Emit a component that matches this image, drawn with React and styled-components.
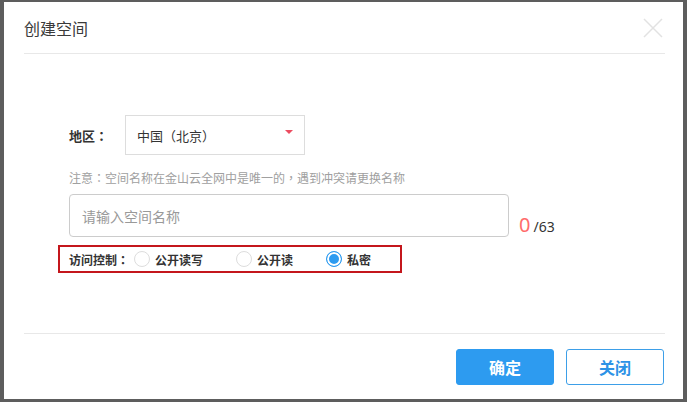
import React from "react";
import styled, { createGlobalStyle } from "styled-components";

const Global = createGlobalStyle`
  html, body { margin: 0; padding: 0; background: #5d5d5d; }
  body {
    font-family: "Noto Sans CJK SC", "Microsoft YaHei", sans-serif;
  }
  * { box-sizing: border-box; }
`;

const Page = styled.div`
  width: 687px;
  height: 402px;
  padding: 2px 4px 3px 4px;
  background: #5d5d5d;
`;

const Modal = styled.div`
  height: 100%;
  background: #fff;
  display: flex;
  flex-direction: column;
  padding: 0 18px 0 20px;
`;

const Header = styled.div`
  height: 52px;
  display: flex;
  align-items: center;
  justify-content: space-between;
  border-bottom: 1px solid #e8e8e8;
`;

const Title = styled.div`
  font-size: 16px;
  color: #3a3a3a;
  line-height: 1;
  margin-top: 1px;
`;

const CloseBtn = styled.div`
  width: 20px;
  height: 20px;
  margin-right: 2px;
  display: flex;
`;

const Body = styled.div`
  padding-left: 45px;
  display: flex;
  flex-direction: column;
`;

const Row = styled.div`
  display: flex;
  align-items: center;
  margin-top: ${(p) => p.$mt || 0}px;
`;

/* centred full-width punctuation, as in the reference's font */
const Punct = styled.span`
  font-family: "Noto Sans CJK TC", "Noto Sans CJK SC", sans-serif;
`;

const Label = styled.div`
  width: 56px;
  flex-shrink: 0;
  white-space: nowrap;
  font-size: 13px;
  font-weight: bold;
  color: #333;
`;

const Select = styled.div`
  position: relative;
  width: 180px;
  height: 40px;
  border: 1px solid #ddd;
  display: flex;
  align-items: center;
  padding-left: 11px;
  font-size: 13px;
  color: #333;
  white-space: nowrap;
`;

const Caret = styled.span`
  position: absolute;
  right: 11px;
  top: 14px;
  width: 0;
  height: 0;
  border-left: 4px solid transparent;
  border-right: 4px solid transparent;
  border-top: 4px solid #ec4c60;
`;

const Note = styled.div`
  margin-top: 14px;
  font-size: 12px;
  line-height: 17px;
  color: #a0a0a0;
  white-space: nowrap;
`;

const InputRow = styled.div`
  display: flex;
  align-items: flex-end;
  margin-top: 8px;
`;

const Input = styled.div`
  width: 440px;
  height: 43px;
  border: 1px solid #ccc;
  border-radius: 4px;
  display: flex;
  align-items: center;
  padding-left: 12px;
  font-size: 14px;
  color: #999;
`;

const Counter = styled.div`
  margin-left: 10px;
  display: flex;
  align-items: baseline;
  line-height: 1;
  margin-bottom: 2px;
  font-family: "Noto Sans", "Noto Sans CJK SC", sans-serif;
`;

const Count = styled.span`
  font-size: 20px;
  color: #ff6b6b;
  margin-right: 3px;
`;

const Max = styled.span`
  font-size: 14px;
  color: #333;
`;

const AccessBox = styled.div`
  margin-top: 8px;
  margin-left: -11px;
  width: 344px;
  height: 28px;
  border: 2px solid #c4161c;
  display: flex;
  align-items: center;
  padding-left: 9px;
  white-space: nowrap;
`;

const AccessLabel = styled.span`
  flex-shrink: 0;
  font-size: 12px;
  font-weight: bold;
  color: #333;
  margin-right: 5px;
`;

const RadioItem = styled.label`
  flex-shrink: 0;
  display: flex;
  align-items: center;
  margin-right: 33px;
  font-size: 12px;
  font-weight: bold;
  color: #333;
`;

const RadioDot = styled.span`
  flex-shrink: 0;
  width: 16px;
  height: 16px;
  border-radius: 50%;
  margin-right: 5px;
  border: 1px solid ${(p) => (p.$checked ? "#2d9bf0" : "#ddd")};
  background: ${(p) => (p.$checked ? "#2d9bf0" : "#fff")};
  box-shadow: inset 0 0 0 2px #fff;
`;

const Footer = styled.div`
  margin-top: auto;
  height: 66px;
  border-top: 1px solid #e8e8e8;
  display: flex;
  justify-content: flex-end;
  align-items: flex-start;
  padding-top: 15px;
  padding-right: 1px;
  gap: 12px;
`;

const Button = styled.button`
  width: 98px;
  height: 36px;
  border-radius: 3px;
  font-family: "Noto Sans CJK SC", sans-serif;
  font-size: 16px;
  font-weight: bold;
  cursor: pointer;
  border: 1px solid ${(p) => (p.$primary ? "#2d9bf0" : "#3d9fe8")};
  background: ${(p) => (p.$primary ? "#2d9bf0" : "#fff")};
  color: ${(p) => (p.$primary ? "#fff" : "#2d92e6")};
  padding: 0;
`;

const options = [
  { label: "公开读写", checked: false },
  { label: "公开读", checked: false },
  { label: "私密", checked: true },
];

export default function App() {
  return (
    <>
      <Global />
      <Page>
        <Modal>
          <Header>
            <Title>创建空间</Title>
            <CloseBtn>
              <svg width="20" height="20" viewBox="0 0 20 20">
                <path d="M1 1 L19 19 M19 1 L1 19" stroke="#e2e2e2" strokeWidth="1.5" fill="none" />
              </svg>
            </CloseBtn>
          </Header>
          <Body>
            <Row $mt={61}>
              <Label>
                地区<Punct>：</Punct>
              </Label>
              <Select>
                中国<Punct>（</Punct>北京<Punct>）</Punct>
                <Caret />
              </Select>
            </Row>
            <Note>
              注意<Punct>：</Punct>空间名称在金山云全网中是唯一的<Punct>，</Punct>遇到冲突请更换名称
            </Note>
            <InputRow>
              <Input>请输入空间名称</Input>
              <Counter>
                <Count>0</Count>
                <Max>/63</Max>
              </Counter>
            </InputRow>
            <AccessBox>
              <AccessLabel>
                访问控制<Punct>：</Punct>
              </AccessLabel>
              {options.map((o) => (
                <RadioItem key={o.label}>
                  <RadioDot $checked={o.checked} />
                  {o.label}
                </RadioItem>
              ))}
            </AccessBox>
          </Body>
          <Footer>
            <Button $primary>确定</Button>
            <Button>关闭</Button>
          </Footer>
        </Modal>
      </Page>
    </>
  );
}
